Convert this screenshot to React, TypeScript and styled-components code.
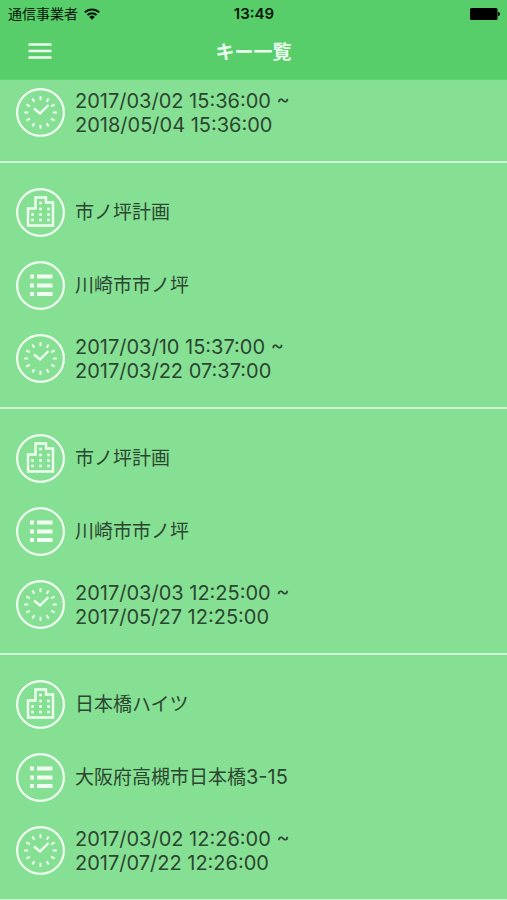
import React from "react";
import styled, { createGlobalStyle } from "styled-components";

const GlobalStyle = createGlobalStyle`
  *, *::before, *::after { box-sizing: border-box; }
  html { overflow: hidden; }
  body {
    margin: 0;
    background: #86e093;
    color: #2b4631;
    font-family: Inter, "Noto Sans CJK JP", sans-serif;
  }
`;

const Header = styled.header`
  background: #57ce69;
  border-bottom: 1px solid #62d073;
`;

const StatusBar = styled.div`
  display: grid;
  grid-template-columns: 1fr auto 1fr;
  align-items: center;
  height: 27px;
  padding: 0 7px 0 8px;
  color: #07150a;
`;

const Carrier = styled.div`
  display: flex;
  align-items: center;
  gap: 6px;
  font-size: 14px;
  line-height: 20px;
`;

const Time = styled.time`
  font-size: 15px;
  font-weight: 600;
  line-height: 20px;
`;

const Battery = styled.svg`
  display: block;
  justify-self: end;
`;

const NavBar = styled.div`
  display: grid;
  grid-template-columns: 48px 1fr 48px;
  align-items: center;
  height: 52px;
  padding: 0 16px;
`;

const MenuButton = styled.button`
  display: grid;
  place-items: center;
  width: 48px;
  height: 48px;
  padding: 0 0 4px;
  border: 0;
  background: none;
  cursor: pointer;
`;

const Title = styled.h1`
  margin: 0;
  color: #e9fced;
  font-size: 19px;
  font-weight: 700;
  line-height: 24px;
  text-align: center;
`;

const KeyList = styled.ul`
  margin: 0;
  padding: 0;
  list-style: none;
`;

const KeyItem = styled.li<{ $partial?: boolean }>`
  display: flex;
  flex-direction: column;
  gap: 24px;
  padding: ${({ $partial }) => ($partial ? "8px" : "25px")} 16px 24px;
  border-bottom: 2px solid #cdf5d3;
`;

const Row = styled.div`
  display: flex;
  align-items: center;
  gap: 10px;
`;

const Icon = styled.svg`
  flex: none;
  width: 49px;
  height: 49px;
  fill: none;
  stroke: #f0fff2;
`;

const Label = styled.span`
  font-size: 19px;
  line-height: 24px;
`;

const BlockNumber = styled.span`
  font-size: 20px;
`;

const Period = styled.span`
  font-size: 20px;
  line-height: 24px;
`;

const HOURS = Array.from({ length: 12 }, (_, i) => i * 30);

const ClockIcon = () => (
  <Icon viewBox="0 0 49 49" aria-hidden="true">
    <circle cx="24.5" cy="24.5" r="23.4" strokeWidth="2.2" />
    {HOURS.map((a) => (
      <path key={a} d="M24.5 8.200v4" strokeWidth="2" transform={`rotate(${a} 24.5 24.5)`} />
    ))}
    <path d="M18 20.500l6 5 8.500-8.500" strokeWidth="2.3" />
  </Icon>
);

const WINDOWS = [
  [24.5, 15], [24.5, 21], [32.5, 21],
  [16.5, 26.5], [24.5, 26.5], [32.5, 26.5],
  [16.5, 32], [24.5, 32], [32.5, 32],
];

const BuildingIcon = () => (
  <Icon viewBox="0 0 49 49" aria-hidden="true">
    <circle cx="24.5" cy="24.5" r="23.4" strokeWidth="2.2" />
    <path d="M12 37.500V20.500h7.500v-11h10.500v5h7v23z" strokeWidth="2.400" />
    {WINDOWS.map(([x, y]) => (
      <rect key={`${x}-${y}`} x={x - 1.3} y={y - 1.3} width="2.6" height="2.6" fill="#f0fff2" stroke="none" />
    ))}
  </Icon>
);

const ListIcon = () => (
  <Icon viewBox="0 0 49 49" aria-hidden="true">
    <circle cx="24.5" cy="24.5" r="23.4" strokeWidth="2.2" />
    <path d="M14 15.500h4M14 24.500h4M14 33h4M21 15.500h15.500M21 24.500h15.500M21 33h15.500" strokeWidth="3.9" />
  </Icon>
);

interface KeyEntry {
  name?: string;
  address?: string;
  block?: string;
  from: string;
  to: string;
}

const KEYS: KeyEntry[] = [
  { from: "2017/03/02 15:36:00", to: "2018/05/04 15:36:00" },
  { name: "市ノ坪計画", address: "川崎市市ノ坪", from: "2017/03/10 15:37:00", to: "2017/03/22 07:37:00" },
  { name: "市ノ坪計画", address: "川崎市市ノ坪", from: "2017/03/03 12:25:00", to: "2017/05/27 12:25:00" },
  { name: "日本橋ハイツ", address: "大阪府高槻市日本橋", block: "3-15", from: "2017/03/02 12:26:00", to: "2017/07/22 12:26:00" },
];

export default function App() {
  return (
    <>
      <GlobalStyle />
      <Header>
        <StatusBar>
          <Carrier>
            通信事業者
            <svg width="16" height="12" viewBox="0 0 15 11" fill="none" stroke="#07150a" aria-hidden="true">
              <path d="M.8 4a9.500 9.500 0 0 1 13.400 0M3.200 6.500a6.100 6.100 0 0 1 8.600 0" strokeWidth="1.900" />
              <path d="M7.500 11L4.900 8.300a3.700 3.700 0 0 1 5.200 0z" fill="#07150a" stroke="none" />
            </svg>
          </Carrier>
          <Time>13:49</Time>
          <Battery width="30" height="12" viewBox="0 0 30 12" aria-hidden="true">
            <rect width="27.500" height="12" rx="1.500" />
            <path d="M28 4a2 2 0 0 1 0 4z" />
          </Battery>
        </StatusBar>
        <NavBar>
          <MenuButton type="button" aria-label="メニュー">
            <svg width="24" height="18" viewBox="0 0 24 18" fill="none" stroke="#edffef" strokeWidth="2.700">
              <path d="M.5 2.500h23M.5 9h23M.5 15.500h23" />
            </svg>
          </MenuButton>
          <Title>キー一覧</Title>
        </NavBar>
      </Header>
      <main>
        <KeyList>
          {KEYS.map((k, i) => (
            <KeyItem key={i} $partial={!k.name}>
              {k.name && (
                <Row>
                  <BuildingIcon />
                  <Label>{k.name}</Label>
                </Row>
              )}
              {k.address && (
                <Row>
                  <ListIcon />
                  <Label>
                    {k.address}
                    {k.block && <BlockNumber>{k.block}</BlockNumber>}
                  </Label>
                </Row>
              )}
              <Row>
                <ClockIcon />
                <Period>
                  {k.from} ~<br />
                  {k.to}
                </Period>
              </Row>
            </KeyItem>
          ))}
        </KeyList>
      </main>
    </>
  );
}
